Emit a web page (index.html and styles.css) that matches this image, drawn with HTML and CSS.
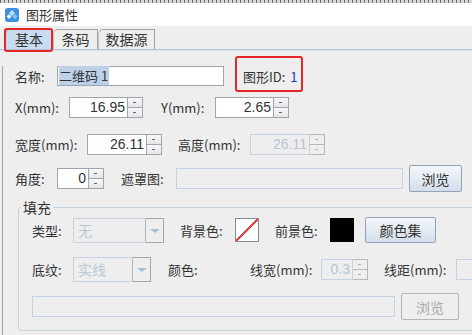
FILE: index.html
```html
<!DOCTYPE html>
<html lang="zh-CN">
<head>
    <meta charset="UTF-8">
    <title>图形属性</title>
    <link rel="stylesheet" href="styles.css">
</head>
<body>
    <div class="ruler"></div>
    <div class="titlebar">
        <svg class="app-icon" width="14" height="14" viewBox="0 0 14 14">
            <rect x="0" y="0" width="14" height="14" rx="3" fill="#3f8fe0"/>
            <path d="M7 2 L10 5 L7 8 L4 5 Z" fill="#bfe0ff"/>
            <path d="M4 6 L6.5 8.5 L4 11 L1.5 8.5 Z" fill="#e8f4ff"/>
            <path d="M10 6 L12.5 8.5 L10 11 L7.5 8.5 Z" fill="#8cc6ff"/>
        </svg>
        <span>图形属性</span>
    </div>
    <div class="tabs">
        <div class="tab active">基本<span class="mark mark-tab"></span></div>
        <div class="tab">条码</div>
        <div class="tab">数据源</div>
    </div>
    <div class="tab-line"></div>

    <div class="panel">
        <div class="row row-name">
            <span class="lbl w42">名称:</span>
            <div class="field name-field"><span class="sel">二维码 1</span></div>
            <div class="shape-id">图形ID: <span class="id-num">1</span><span class="mark mark-id"></span></div>
        </div>

        <div class="row row-pos">
            <span class="lbl w54">X(mm):</span>
            <div class="spin"><div class="spin-val w59">16.95</div><div class="spin-btns"><span class="up"></span><span class="down"></span></div></div>
            <span class="lbl w54 gap18">Y(mm):</span>
            <div class="spin"><div class="spin-val w59">2.65</div><div class="spin-btns"><span class="up"></span><span class="down"></span></div></div>
        </div>

        <div class="row row-size">
            <span class="lbl w72">宽度(mm):</span>
            <div class="spin"><div class="spin-val w60">26.11</div><div class="spin-btns"><span class="up"></span><span class="down"></span></div></div>
            <span class="lbl w72 gap16">高度(mm):</span>
            <div class="spin disabled"><div class="spin-val w60">26.11</div><div class="spin-btns"><span class="up"></span><span class="down"></span></div></div>
        </div>

        <div class="row row-angle">
            <span class="lbl w42">角度:</span>
            <div class="spin"><div class="spin-val w32">0</div><div class="spin-btns"><span class="up"></span><span class="down"></span></div></div>
            <span class="lbl w55 gap17">遮罩图:</span>
            <div class="field disabled mask-field"></div>
            <button class="btn browse">浏览</button>
        </div>

        <fieldset class="fill">
            <legend>填充</legend>
            <div class="row row-type">
                <span class="lbl w41">类型:</span>
                <div class="combo disabled w91"><span class="combo-val">无</span><span class="combo-arrow"></span></div>
                <span class="lbl w55 gap16">背景色:</span>
                <div class="swatch none"></div>
                <span class="lbl w55 gap16">前景色:</span>
                <div class="swatch black"></div>
                <button class="btn colorset">颜色集</button>
            </div>

            <div class="row row-pattern">
                <span class="lbl w41">底纹:</span>
                <div class="combo disabled w78"><span class="combo-val">实线</span><span class="combo-arrow"></span></div>
                <span class="lbl w82 gap17">颜色:</span>
                <span class="lbl w71">线宽(mm):</span>
                <div class="spin disabled"><div class="spin-val w32">0.3</div><div class="spin-btns"><span class="up"></span><span class="down"></span></div></div>
                <span class="lbl w72 gap16">线距(mm):</span>
                <div class="spin disabled"><div class="spin-val w32">0</div><div class="spin-btns"><span class="up"></span><span class="down"></span></div></div>
            </div>

            <div class="row row-image">
                <div class="field disabled image-field"></div>
                <button class="btn browse disabled-btn">浏览</button>
            </div>
        </fieldset>
    </div>
</body>
</html>
```

FILE: styles.css
```css
html, body {
    margin: 0;
    padding: 0;
    width: 472px;
    height: 335px;
    overflow: hidden;
}

body {
    font-family: "Noto Sans CJK SC", "Liberation Sans", sans-serif;
    font-size: 13px;
    color: #333;
    background-color: #eeeeee;
}

.ruler {
    height: 3px;
    background-color: #d8d8d8;
    background-image: repeating-linear-gradient(to right, #6a6a6a 0, #6a6a6a 1px, transparent 1px, transparent 4px);
}

.titlebar {
    height: 23px;
    background-color: #fff;
    display: flex;
    align-items: center;
    padding-left: 5px;
}

.app-icon {
    margin-right: 7px;
}

/* tabs */
.tabs {
    height: 23px;
    display: flex;
    align-items: flex-end;
    padding-left: 5px;
    background-color: #eeeeee;
}

.tab {
    position: relative;
    height: 20px;
    box-sizing: border-box;
    border: 1px solid #a3a3a3;
    border-bottom: none;
    border-left-color: #c0c0c0;
    border-top-left-radius: 5px 6px;
    background-color: #eeeeee;
    font-size: 14px;
    line-height: 19px;
    text-align: center;
    color: #333;
}

.tab:nth-child(1) { width: 48px; }
.tab:nth-child(2) { width: 45px; }
.tab:nth-child(3) { width: 57px; }

.tab.active {
    background-color: #c9dbef;
    border-color: #9fb0c4;
}

.tab-line {
    height: 1px;
    background-color: #b3c1d6;
    border-bottom: 1px solid #dbe5f1;
}

.mark {
    position: absolute;
    box-sizing: border-box;
    border: 2px solid #e32626;
    border-radius: 3px;
}

.mark-tab {
    left: -2px;
    top: -2px;
    width: 49px;
    height: 24px;
}

/* panel */
.panel {
    margin-left: 2px;
    border-left: 1px solid #a5a5a5;
    padding-left: 12px;
    height: 284px;
}

.row {
    display: flex;
    align-items: center;
}

.row > * {
    flex: none;
}

.row-name { margin-top: 15px; height: 20px; }
.row-pos { margin-top: 11px; height: 21px; }
.row-size { margin-top: 16px; height: 20px; }
.row-angle { margin-top: 11px; height: 27px; }
.row-type { height: 26px; }
.row-pattern { margin-top: 13px; height: 26px; }
.row-image { margin-top: 11px; height: 27px; }

.lbl {
    white-space: nowrap;
}

.w41 { width: 41px; }
.w42 { width: 42px; }
.w54 { width: 54px; }
.w55 { width: 55px; }
.w71 { width: 71px; }
.w72 { width: 72px; }
.w82 { width: 82px; }
.gap16 { margin-left: 16px; }
.gap17 { margin-left: 17px; }
.gap18 { margin-left: 18px; }

.field {
    box-sizing: border-box;
    height: 20px;
    border: 1px solid #9ea6b1;
    background-color: #fff;
    line-height: 18px;
    padding-left: 1px;
}

.field.disabled {
    background-color: #eeeeee;
    border-color: #c4d2e1;
}

.name-field {
    width: 167px;
}

.sel {
    background-color: #bcd1e8;
    color: #333;
    padding-right: 1px;
}

.shape-id {
    position: relative;
    margin-left: 19px;
}

.id-num {
    color: #2436c8;
    margin-left: 2px;
}

.mark-id {
    left: -8px;
    top: -11px;
    width: 68px;
    height: 36px;
}

/* spinners */
.spin {
    display: flex;
    height: 21px;
}

.spin-val {
    box-sizing: border-box;
    height: 21px;
    border: 1px solid #9ea6b1;
    background-color: #fff;
    text-align: right;
    padding-right: 2px;
    line-height: 19px;
    font-family: "Liberation Sans", sans-serif;
    font-size: 14px;
    color: #333;
}

.w32 { width: 32px; }
.w59 { width: 59px; }
.w60 { width: 60px; }

.spin-btns {
    width: 15px;
    height: 21px;
    box-sizing: border-box;
    display: flex;
    flex-direction: column;
}

.spin-btns span {
    flex: 1;
    border: 1px solid #9ea6b1;
    border-left: none;
    background: linear-gradient(#f8f8f8, #e6e6e6);
    position: relative;
}

.spin-btns .down {
    border-top: none;
}

.spin-btns span::after {
    content: "";
    position: absolute;
    left: 5px;
    top: 4px;
    width: 3px;
    height: 1px;
    background-color: #666;
}

.spin.disabled .spin-val {
    background-color: #eeeeee;
    border-color: #c4d2e1;
    color: #b6c4d4;
}

.spin.disabled .spin-btns span {
    border-color: #b8b8b8;
    background: #eeeeee;
}

.spin.disabled .spin-btns span::after {
    background-color: #b0b0b0;
}

.mask-field {
    width: 227px;
    height: 21px;
}

/* buttons */
.btn {
    box-sizing: border-box;
    height: 27px;
    border: 1px solid #93a3b7;
    border-radius: 2px;
    background: linear-gradient(#f4f7fb, #d3deeb);
    font-family: "Noto Sans CJK SC", sans-serif;
    font-size: 14px;
    color: #333;
    padding: 0;
}

.browse {
    width: 53px;
    margin-left: 6px;
}

.colorset {
    width: 71px;
    height: 26px;
    margin-left: 11px;
}

.disabled-btn {
    width: 58px;
    background: #eeeeee;
    border-color: #b4b4b4;
    color: #a9a9a9;
}

/* fill group */
.fill {
    margin: 7px 0 0 3px;
    padding: 1px 0 10px 13px;
    border: 1px solid #c6d2de;
    border-radius: 3px;
    width: 520px;
    box-sizing: border-box;
    min-width: 0;
}

.fill legend {
    margin-left: -11px;
    padding: 0 2px;
    font-size: 14px;
    line-height: 17px;
}

.combo {
    box-sizing: border-box;
    height: 25px;
    display: flex;
    border: 1px solid #c4d2e1;
}

.w78 { width: 78px; }
.w91 { width: 91px; }

.combo-val {
    flex: 1;
    border-right: 1px solid #a8b6c6;
    color: #b9c7d7;
    line-height: 23px;
    padding-left: 4px;
    font-size: 14px;
}

.combo-arrow {
    width: 17px;
    position: relative;
    border: 1px solid #a5a5a5;
    border-left: none;
    margin: -1px -1px -1px 0;
}

.combo-arrow::after {
    content: "";
    position: absolute;
    left: 4px;
    top: 10px;
    border-left: 5px solid transparent;
    border-right: 5px solid transparent;
    border-top: 4px solid #a9c0d9;
}

.swatch {
    width: 24px;
    height: 24px;
    box-sizing: border-box;
}

.swatch.none {
    border: 1px solid #8a8a8a;
    background: #fff linear-gradient(to top right, transparent calc(50% - 1px), #e04444 calc(50% - 1px), #e04444 calc(50% + 1px), transparent calc(50% + 1px));
    transform: scaleX(-1);
}

.swatch.black {
    background-color: #000;
}

.image-field {
    width: 363px;
    height: 21px;
}
```
